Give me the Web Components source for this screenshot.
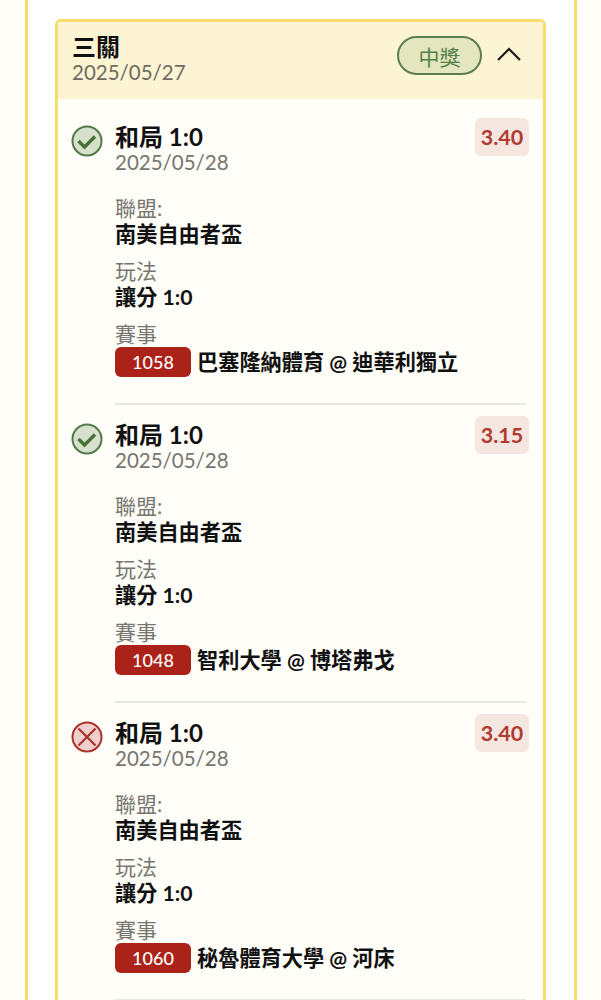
<!DOCTYPE html>
<html lang="zh-Hant">
<head>
<meta charset="utf-8">
<title>三關</title>
<style>
  html, body { margin: 0; height: 1000px; overflow: hidden; background: #fffef8; }
  body { font-family: Lato, "Noto Sans CJK TC", sans-serif; }
</style>
</head>
<body>
<bet-panel>
  <bet-card title="三關" date="2025/05/27" badge="中獎">
    <bet-leg status="win" pick="和局 1:0" date="2025/05/28" odds="3.40" league="南美自由者盃" play="讓分 1:0" code="1058" match="巴塞隆納體育 @ 迪華利獨立"></bet-leg>
    <bet-leg status="win" pick="和局 1:0" date="2025/05/28" odds="3.15" league="南美自由者盃" play="讓分 1:0" code="1048" match="智利大學 @ 博塔弗戈"></bet-leg>
    <bet-leg status="lose" pick="和局 1:0" date="2025/05/28" odds="3.40" league="南美自由者盃" play="讓分 1:0" code="1060" match="秘魯體育大學 @ 河床"></bet-leg>
  </bet-card>
</bet-panel>

<script>
// outer column with the yellow side rails
class BetPanel extends HTMLElement {
    constructor() {
        super();
        this.attachShadow({ mode: 'open' });
        this.shadowRoot.innerHTML = `
            <style>
                :host {
                    display: block;
                    box-sizing: border-box;
                    width: 552px;
                    height: 1000px;
                    margin-left: 25px;
                    padding: 19px 27px 0;
                    background: #ffffff;
                    border-left: 3px solid #f6dd6c;
                    border-right: 3px solid #f6dd6c;
                }
            </style>
            <slot></slot>
        `;
    }
}

class BetCard extends HTMLElement {
    constructor() {
        super();
        this.attachShadow({ mode: 'open' });
    }

    connectedCallback() {
        this.shadowRoot.innerHTML = `
            <style>
                :host {
                    display: block;
                    box-sizing: border-box;
                    width: 491px;
                    border: 3px solid #f6dd6c;
                    border-bottom: 0;
                    border-radius: 6px 6px 0 0;
                    background: #fffef8;
                }
                header {
                    display: flex;
                    align-items: flex-start;
                    box-sizing: border-box;
                    height: 77px;
                    padding: 12px 21px 0 14px;
                    background: #fdf4d3;
                }
                .text { flex: 1; }
                .title {
                    font-size: 24px;
                    line-height: 26px;
                    font-weight: 700;
                    color: #111;
                }
                .date {
                    font-size: 20.5px;
                    line-height: 24px;
                    color: #6f6b60;
                }
                .badge {
                    box-sizing: border-box;
                    display: flex;
                    align-items: center;
                    justify-content: center;
                    width: 85px;
                    height: 39px;
                    margin: 2px 14px 0 0;
                    border: 2px solid #5a7f4c;
                    border-radius: 20px;
                    background: #e3e6bf;
                    color: #55804a;
                    font-size: 21px;
                }
                svg { display: block; margin-top: 12px; }
                main { padding: 8px 17px 0 13px; }
            </style>
            <header>
                <div class="text">
                    <div class="title">${this.getAttribute('title')}</div>
                    <div class="date">${this.getAttribute('date')}</div>
                </div>
                <div class="badge">${this.getAttribute('badge')}</div>
                <svg width="26" height="16" viewBox="0 0 26 16" fill="none" stroke="#1a1a1a" stroke-width="2.2">
                    <path d="M2 14 L13 3 L24 14"/>
                </svg>
            </header>
            <main><slot></slot></main>
        `;
    }
}

class BetLeg extends HTMLElement {
    constructor() {
        super();
        this.attachShadow({ mode: 'open' });
    }

    statusIcon(status) {
        if (status === 'win') {
            return `<svg width="32" height="32" viewBox="0 0 32 32">
                <circle cx="16" cy="16" r="14.5" fill="#d7e0cc" stroke="#527a49" stroke-width="2"/>
                <path d="M7.5 16 L13.5 22 L24 11.5" fill="none" stroke="#44733a" stroke-width="3.4"/>
            </svg>`;
        }
        return `<svg width="32" height="32" viewBox="0 0 32 32">
            <circle cx="16" cy="16" r="14.5" fill="#efd0cc" stroke="#a9322b" stroke-width="2"/>
            <path d="M7.5 7.5 L24.5 24.5 M24.5 7.5 L7.5 24.5" fill="none" stroke="#a9322b" stroke-width="2.2"/>
        </svg>`;
    }

    connectedCallback() {
        const get = (name) => this.getAttribute(name);
        this.shadowRoot.innerHTML = `
            <style>
                :host {
                    display: grid;
                    grid-template-columns: 44px 1fr;
                    height: 298px;
                    box-sizing: border-box;
                    padding-top: 15px;
                }
                .icon { padding-top: 3px; }
                svg { display: block; }
                .content {
                    height: 283px;
                    box-sizing: border-box;
                    border-bottom: 2px solid #e8e7e0;
                }
                .top {
                    display: flex;
                    justify-content: space-between;
                    align-items: flex-start;
                }
                .pick {
                    font-size: 24px;
                    line-height: 30px;
                    font-weight: 700;
                    color: #111;
                }
                .date {
                    font-size: 20.5px;
                    line-height: 22px;
                    margin-top: -1px;
                    color: #77756f;
                }
                .odds {
                    display: flex;
                    align-items: center;
                    justify-content: center;
                    width: 54px;
                    height: 38px;
                    margin: -4px -3px 0 0;
                    border-radius: 6px;
                    background: #f5e6e0;
                    color: #b13a30;
                    font-size: 21.5px;
                    font-weight: 700;
                }
                .label {
                    font-size: 21px;
                    line-height: 26px;
                    color: #77756f;
                }
                .value {
                    font-size: 21.2px;
                    line-height: 26px;
                    font-weight: 700;
                    color: #111;
                    display: flex;
                    align-items: center;
                    gap: 6px;
                }
                .field { margin-top: 11px; }
                .first { margin-top: 22px; }
                .code {
                    display: flex;
                    align-items: center;
                    justify-content: center;
                    width: 76px;
                    height: 30px;
                    border-radius: 6px;
                    background: #ab2318;
                    color: #fff;
                    font-size: 18px;
                    font-weight: 500;
                }
            </style>
            <div class="icon">${this.statusIcon(get('status'))}</div>
            <div class="content">
                <div class="top">
                    <div>
                        <div class="pick">${get('pick')}</div>
                        <div class="date">${get('date')}</div>
                    </div>
                    <div class="odds">${get('odds')}</div>
                </div>
                <div class="field first">
                    <div class="label">聯盟:</div>
                    <div class="value">${get('league')}</div>
                </div>
                <div class="field">
                    <div class="label">玩法</div>
                    <div class="value">${get('play')}</div>
                </div>
                <div class="field">
                    <div class="label">賽事</div>
                    <div class="value"><span class="code">${get('code')}</span><span>${get('match')}</span></div>
                </div>
            </div>
        `;
    }
}

customElements.define('bet-panel', BetPanel);
customElements.define('bet-card', BetCard);
customElements.define('bet-leg', BetLeg);
</script>
</body>
</html>
